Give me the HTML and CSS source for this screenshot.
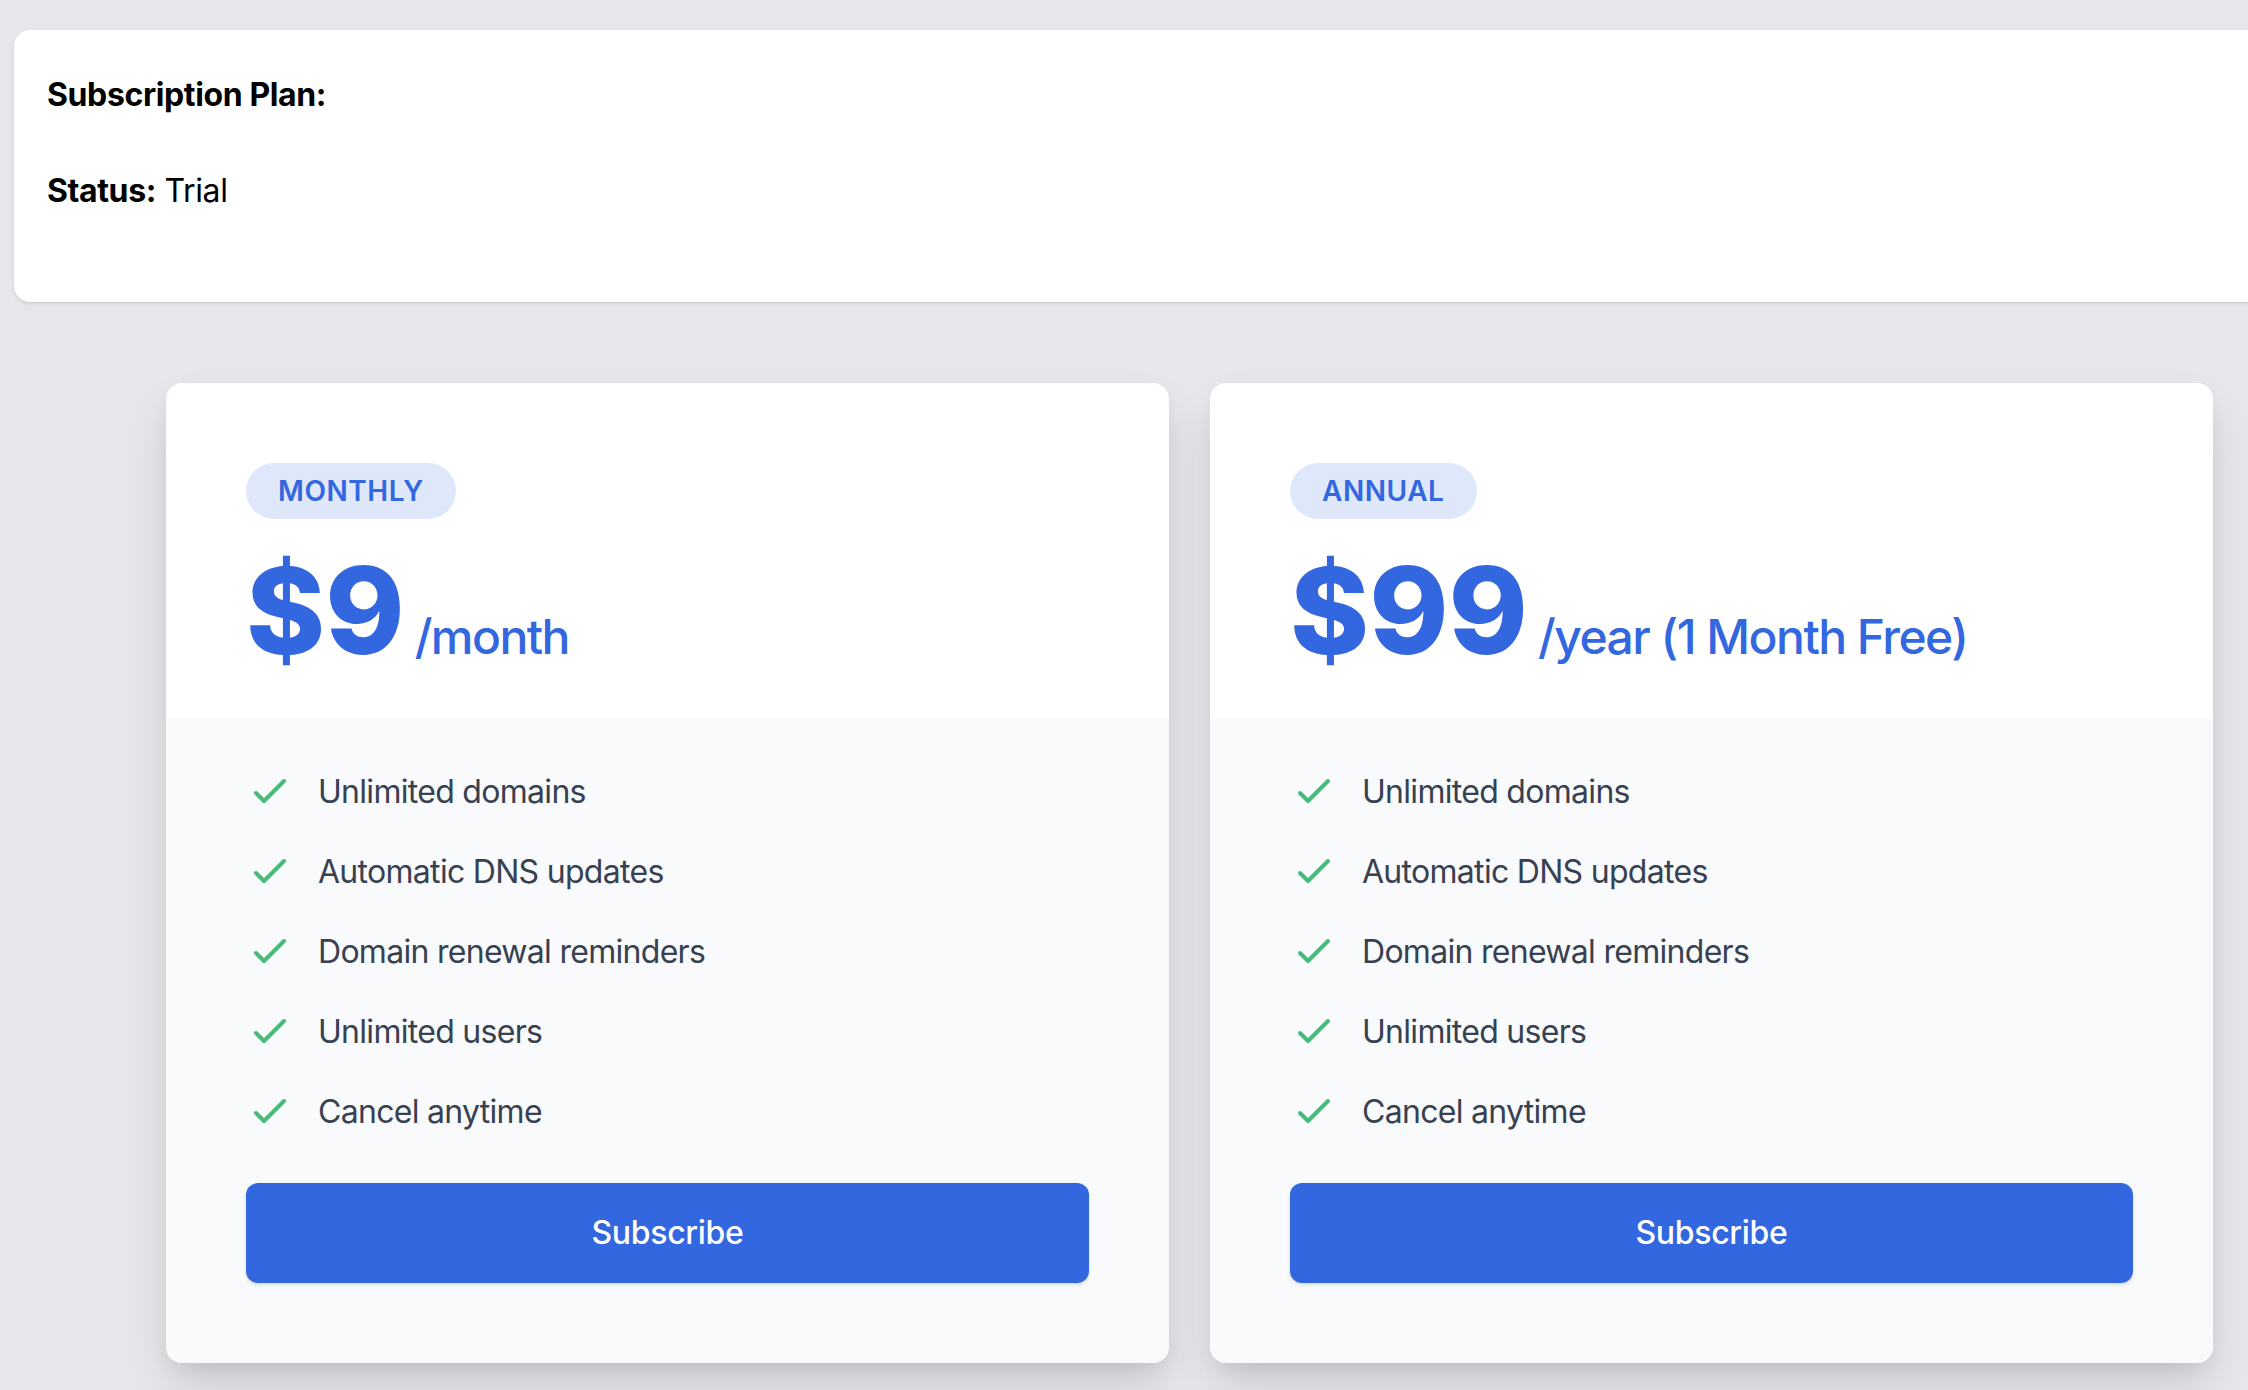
FILE: index.html
```html
<!DOCTYPE html>
<html lang="en">
<head>
<meta charset="utf-8">
<title>Subscription</title>
<link rel="stylesheet" href="styles.css">
</head>
<body>
<div class="page">
  <section class="summary">
    <p><strong>Subscription Plan:</strong></p>
    <p><strong>Status:</strong> Trial</p>
  </section>

  <div class="plans">
    <article class="plan">
      <div class="plan-head">
        <span class="badge">Monthly</span>
        <div class="price">$9<span class="per">/month</span></div>
      </div>
      <div class="plan-body">
        <ul class="features">
          <li><svg class="check" viewBox="0 0 24 24" fill="none" stroke="currentColor" stroke-width="2" stroke-linecap="round" stroke-linejoin="round"><path d="M5 13l4 4L19 7"/></svg><span>Unlimited domains</span></li>
          <li><svg class="check" viewBox="0 0 24 24" fill="none" stroke="currentColor" stroke-width="2" stroke-linecap="round" stroke-linejoin="round"><path d="M5 13l4 4L19 7"/></svg><span>Automatic DNS updates</span></li>
          <li><svg class="check" viewBox="0 0 24 24" fill="none" stroke="currentColor" stroke-width="2" stroke-linecap="round" stroke-linejoin="round"><path d="M5 13l4 4L19 7"/></svg><span>Domain renewal reminders</span></li>
          <li><svg class="check" viewBox="0 0 24 24" fill="none" stroke="currentColor" stroke-width="2" stroke-linecap="round" stroke-linejoin="round"><path d="M5 13l4 4L19 7"/></svg><span>Unlimited users</span></li>
          <li><svg class="check" viewBox="0 0 24 24" fill="none" stroke="currentColor" stroke-width="2" stroke-linecap="round" stroke-linejoin="round"><path d="M5 13l4 4L19 7"/></svg><span>Cancel anytime</span></li>
        </ul>
        <button class="subscribe" type="button">Subscribe</button>
      </div>
    </article>

    <article class="plan">
      <div class="plan-head">
        <span class="badge">Annual</span>
        <div class="price">$99<span class="per">/year (1 Month Free)</span></div>
      </div>
      <div class="plan-body">
        <ul class="features">
          <li><svg class="check" viewBox="0 0 24 24" fill="none" stroke="currentColor" stroke-width="2" stroke-linecap="round" stroke-linejoin="round"><path d="M5 13l4 4L19 7"/></svg><span>Unlimited domains</span></li>
          <li><svg class="check" viewBox="0 0 24 24" fill="none" stroke="currentColor" stroke-width="2" stroke-linecap="round" stroke-linejoin="round"><path d="M5 13l4 4L19 7"/></svg><span>Automatic DNS updates</span></li>
          <li><svg class="check" viewBox="0 0 24 24" fill="none" stroke="currentColor" stroke-width="2" stroke-linecap="round" stroke-linejoin="round"><path d="M5 13l4 4L19 7"/></svg><span>Domain renewal reminders</span></li>
          <li><svg class="check" viewBox="0 0 24 24" fill="none" stroke="currentColor" stroke-width="2" stroke-linecap="round" stroke-linejoin="round"><path d="M5 13l4 4L19 7"/></svg><span>Unlimited users</span></li>
          <li><svg class="check" viewBox="0 0 24 24" fill="none" stroke="currentColor" stroke-width="2" stroke-linecap="round" stroke-linejoin="round"><path d="M5 13l4 4L19 7"/></svg><span>Cancel anytime</span></li>
        </ul>
        <button class="subscribe" type="button">Subscribe</button>
      </div>
    </article>
  </div>
</div>
</body>
</html>
```

FILE: styles.css
```css
html, body {
  margin: 0;
  padding: 0;
  background: #e5e7eb;
  overflow: hidden;
}

body {
  font-family: Inter, "Noto Sans", "Liberation Sans", sans-serif;
  color: #000;
  height: 1390px;
}

.page {
  width: 2248px;
  overflow: hidden;
  height: 1390px;
}

.summary {
  margin: 30px -60px 0 14px;
  padding: 41px 33px 39px;
  background: #fff;
  border-radius: 16px;
  box-shadow: 0 2px 4px rgba(0, 0, 0, 0.08), 0 1px 2px rgba(0, 0, 0, 0.06);
}

.summary p {
  margin: 0 0 48px;
  font-size: 32px;
  line-height: 48px;
  letter-spacing: -0.012em;
}

.summary strong {
  font-weight: 700;
}

.plans {
  display: grid;
  grid-template-columns: 1003px 1003px;
  column-gap: 41px;
  padding-left: 166px;
  margin-top: 81px;
}

.plan {
  background: #fff;
  border-radius: 16px;
  overflow: hidden;
  box-shadow: 0 24px 48px -6px rgba(0, 0, 0, 0.14), 0 10px 20px -4px rgba(0, 0, 0, 0.06);
}

.plan-head {
  padding: 80px 80px 48px;
}

.badge {
  display: inline-flex;
  padding: 8px 32px;
  border-radius: 9999px;
  background: #dfe8fa;
  color: #3367e0;
  font-size: 28px;
  line-height: 40px;
  font-weight: 600;
  letter-spacing: 0.02em;
  text-transform: uppercase;
}

.price {
  margin-top: 32px;
  display: flex;
  align-items: baseline;
  font-size: 120px;
  line-height: 1;
  font-weight: 800;
  color: #3367e0;
}

.per {
  margin-left: 10px;
  font-size: 48px;
  line-height: 64px;
  font-weight: 500;
  letter-spacing: -0.032em;
}

.plan-body {
  background: #f9fafb;
  padding: 48px 80px 80px;
}

.features {
  list-style: none;
  margin: 0;
  padding: 0;
}

.features li {
  display: flex;
  align-items: flex-start;
}

.features li + li {
  margin-top: 32px;
}

.check {
  flex-shrink: 0;
  width: 48px;
  height: 48px;
  color: #48bb78;
}

.features span {
  margin-left: 24px;
  font-size: 32px;
  line-height: 48px;
  color: #374151;
  letter-spacing: -0.022em;
  position: relative;
  top: 1px;
}

.subscribe {
  margin-top: 48px;
  display: flex;
  align-items: center;
  justify-content: center;
  width: 100%;
  height: 100px;
  border: none;
  border-radius: 12px;
  background: #3367e0;
  color: #fff;
  font-family: inherit;
  font-size: 32px;
  line-height: 48px;
  font-weight: 500;
  letter-spacing: -0.01em;
  box-shadow: 0 2px 4px rgba(0, 0, 0, 0.1), 0 1px 2px rgba(0, 0, 0, 0.06);
  cursor: pointer;
}
```
